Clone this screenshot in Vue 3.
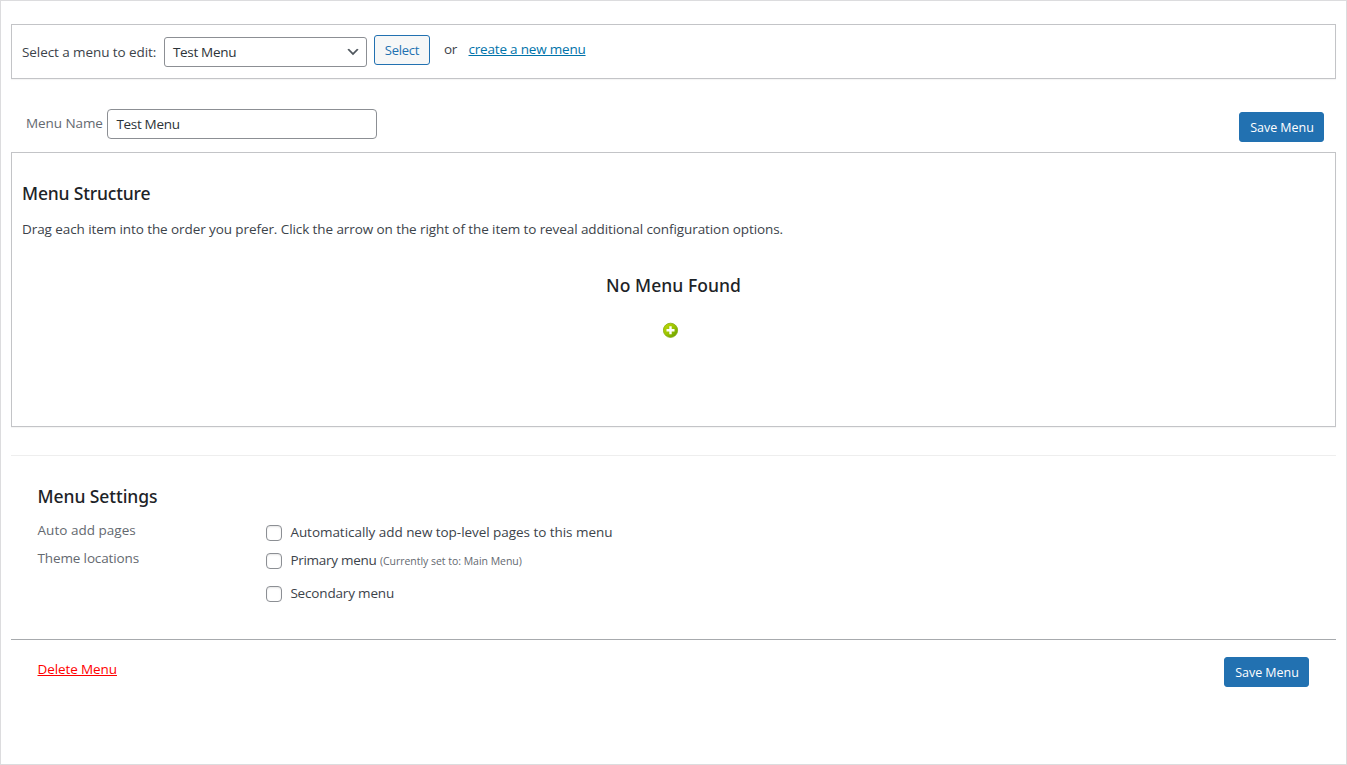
<script setup>
import { ref } from 'vue'

const menuName = ref('Test Menu')
</script>

<template>
  <main class="page">
    <section class="picker panel">
      <label class="picker-label">Select a menu to edit:</label>
      <div class="select" role="combobox">
        <span class="field-text">{{ menuName }}</span>
        <svg class="chevron" viewBox="0 0 20 20" width="16" height="16">
          <path d="M5 6l5 5 5-5 2 1-7 7-7-7 2-1z" fill="#50575e" />
        </svg>
      </div>
      <button class="btn-outline">Select</button>
      <span class="or">or</span>
      <a class="create">create a new menu</a>
    </section>

    <section class="name-row">
      <label class="name-label">Menu Name</label>
      <div class="input"><span class="field-text">{{ menuName }}</span></div>
      <button class="btn-primary">Save Menu</button>
    </section>

    <section class="structure panel">
      <h3 class="heading h-structure">Menu Structure</h3>
      <p class="hint">Drag each item into the order you prefer. Click the arrow on the right of the item to reveal additional configuration options.</p>
      <div class="empty">
        <h3 class="heading h-empty">No Menu Found</h3>
        <svg class="add" width="16" height="16" viewBox="0 0 16 16">
          <defs>
            <linearGradient id="green" x1="0" y1="0" x2="1" y2="1">
              <stop offset="0" stop-color="#c3dc08" />
              <stop offset="0.5" stop-color="#9cc400" />
              <stop offset="1" stop-color="#5f9a00" />
            </linearGradient>
          </defs>
          <circle cx="7.5" cy="8.3" r="7.1" fill="url(#green)" stroke="#83a80c" stroke-width="0.8" />
          <path d="M7.5 4.2v8M3.5 8.2h8" stroke="#fff" stroke-width="2.4" fill="none" />
        </svg>
      </div>
    </section>

    <section class="settings">
      <h3 class="heading h-settings">Menu Settings</h3>
      <div class="setting">
        <span class="legend auto">Auto add pages</span>
        <label class="option"><i class="check"></i><span class="t-auto">Automatically add new top-level pages to this menu</span></label>
      </div>
      <div class="setting">
        <span class="legend theme">Theme locations</span>
        <div class="options">
          <label class="option"><i class="check"></i><span class="t-primary">Primary menu</span><span class="note">(Currently set to: Main Menu)</span></label>
          <label class="option"><i class="check"></i><span class="t-secondary">Secondary menu</span></label>
        </div>
      </div>
    </section>

    <footer class="footer">
      <a class="delete">Delete Menu</a>
      <button class="btn-primary">Save Menu</button>
    </footer>
  </main>
</template>

<style>
body {
  margin: 0;
  background: #fff;
}
</style>

<style scoped>
.page {
  box-sizing: border-box;
  width: 1347px;
  height: 765px;
  padding: 23px 10px 0;
  border: 1px solid #dcdcde;
  background: #fff;
  color: #3c434a;
  font: 13.5px/20px "Open Sans", "Noto Sans", sans-serif;
  white-space: nowrap;
  overflow: hidden;
}

.panel {
  box-sizing: border-box;
  border: 1px solid #c3c4c7;
  box-shadow: 0 1px 1px rgba(0, 0, 0, 0.04);
}

.picker {
  height: 55px;
  display: flex;
  align-items: flex-start;
  padding: 0 10px;
}

.picker-label {
  width: 142px;
  margin-top: 17px;
  letter-spacing: -0.08px;
}

.select,
.input {
  box-sizing: border-box;
  height: 30px;
  border: 1px solid #8c8f94;
  color: #2c3338;
  line-height: 30px;
  display: flex;
  align-items: flex-start;
}

.select {
  width: 203px;
  margin-top: 12px;
  padding: 0 5px 0 8px;
  border-radius: 3px;
  justify-content: space-between;
}

.field-text {
  letter-spacing: -0.33px;
  line-height: 28px;
}

.chevron {
  margin-top: 6px;
}

button {
  box-sizing: border-box;
  height: 30px;
  padding: 0;
  border-radius: 3px;
  font-family: inherit;
  line-height: 28px;
}

.btn-outline {
  width: 56px;
  margin: 10px 0 0 7px;
  border: 1px solid #2271b1;
  background: #f6f7f7;
  color: #2271b1;
  font-size: 13px;
  letter-spacing: -0.25px;
}

.btn-primary {
  width: 85px;
  padding: 1px 0 0 1px;
  border: 1px solid #2271b1;
  background: #2271b1;
  color: #fff;
  font-size: 12.5px;
  letter-spacing: -0.03px;
}

.or {
  width: 24.5px;
  margin: 14px 0 0 14px;
  letter-spacing: -0.35px;
}

.create {
  margin-top: 14px;
  color: #0073aa;
  text-decoration: underline;
  text-decoration-thickness: 1px;
  text-underline-offset: 1px;
  letter-spacing: -0.2px;
}

.name-row {
  display: flex;
  align-items: flex-start;
  height: 73px;
  padding: 0 12px 0 15px;
}

.name-label {
  width: 81px;
  margin-top: 34px;
  color: #646970;
  letter-spacing: -0.08px;
}

.input {
  width: 270px;
  margin-top: 30px;
  padding-left: 8.5px;
  border-radius: 4px;
}

.name-row .btn-primary {
  margin: 33px 0 0 auto;
}

.structure {
  height: 275px;
  padding: 28px 10px 0;
}

.heading {
  margin: 0;
  color: #1d2327;
  font: 500 17.5px/24px "Noto Sans", sans-serif;
}

.h-structure {
  letter-spacing: -0.17px;
}

.hint {
  margin: 14px 0 0;
  letter-spacing: -0.086px;
}

.empty {
  display: flex;
  flex-direction: column;
  align-items: center;
  margin-top: 34px;
}

.h-empty {
  letter-spacing: 0.05px;
}

.add {
  margin: 25px 6px 0 0;
}

.settings {
  box-sizing: border-box;
  height: 184px;
  margin-top: 28px;
  padding: 28px 26px 0 26.5px;
  border-top: 1px solid #eee;
}

.h-settings {
  letter-spacing: -0.06px;
}

.setting {
  display: flex;
  align-items: flex-start;
}

.h-settings + .setting {
  margin-top: 12px;
}

.legend {
  width: 228.5px;
  color: #646970;
}

.auto {
  letter-spacing: 0.03px;
}

.theme {
  letter-spacing: -0.13px;
}

.option {
  display: flex;
  align-items: flex-start;
  height: 28px;
}

.option > span {
  margin-top: 2px;
}

.options .option + .option {
  margin-top: 5px;
}

.check {
  box-sizing: border-box;
  width: 16px;
  height: 16px;
  margin: 5px 8.4px 0 0;
  border: 1px solid #8c8f94;
  border-radius: 4px;
  background: #fff;
  box-shadow: inset 0 1px 2px rgba(0, 0, 0, 0.1);
}

.t-auto {
  letter-spacing: -0.045px;
}

.t-primary {
  letter-spacing: -0.28px;
}

.option > .note {
  margin: 3px 0 0 3.4px;
  color: #646970;
  font-size: 10.5px;
  letter-spacing: -0.03px;
}

.t-secondary {
  letter-spacing: -0.17px;
}

.footer {
  display: flex;
  align-items: flex-start;
  justify-content: space-between;
  padding: 0 27px 0 26.5px;
  border-top: 1px solid #a7aaad;
}

.delete {
  margin-top: 19px;
  color: #f00;
  text-decoration: underline;
  text-decoration-thickness: 1px;
  text-underline-offset: 1px;
  letter-spacing: -0.1px;
}

.footer .btn-primary {
  margin-top: 17px;
}
</style>
